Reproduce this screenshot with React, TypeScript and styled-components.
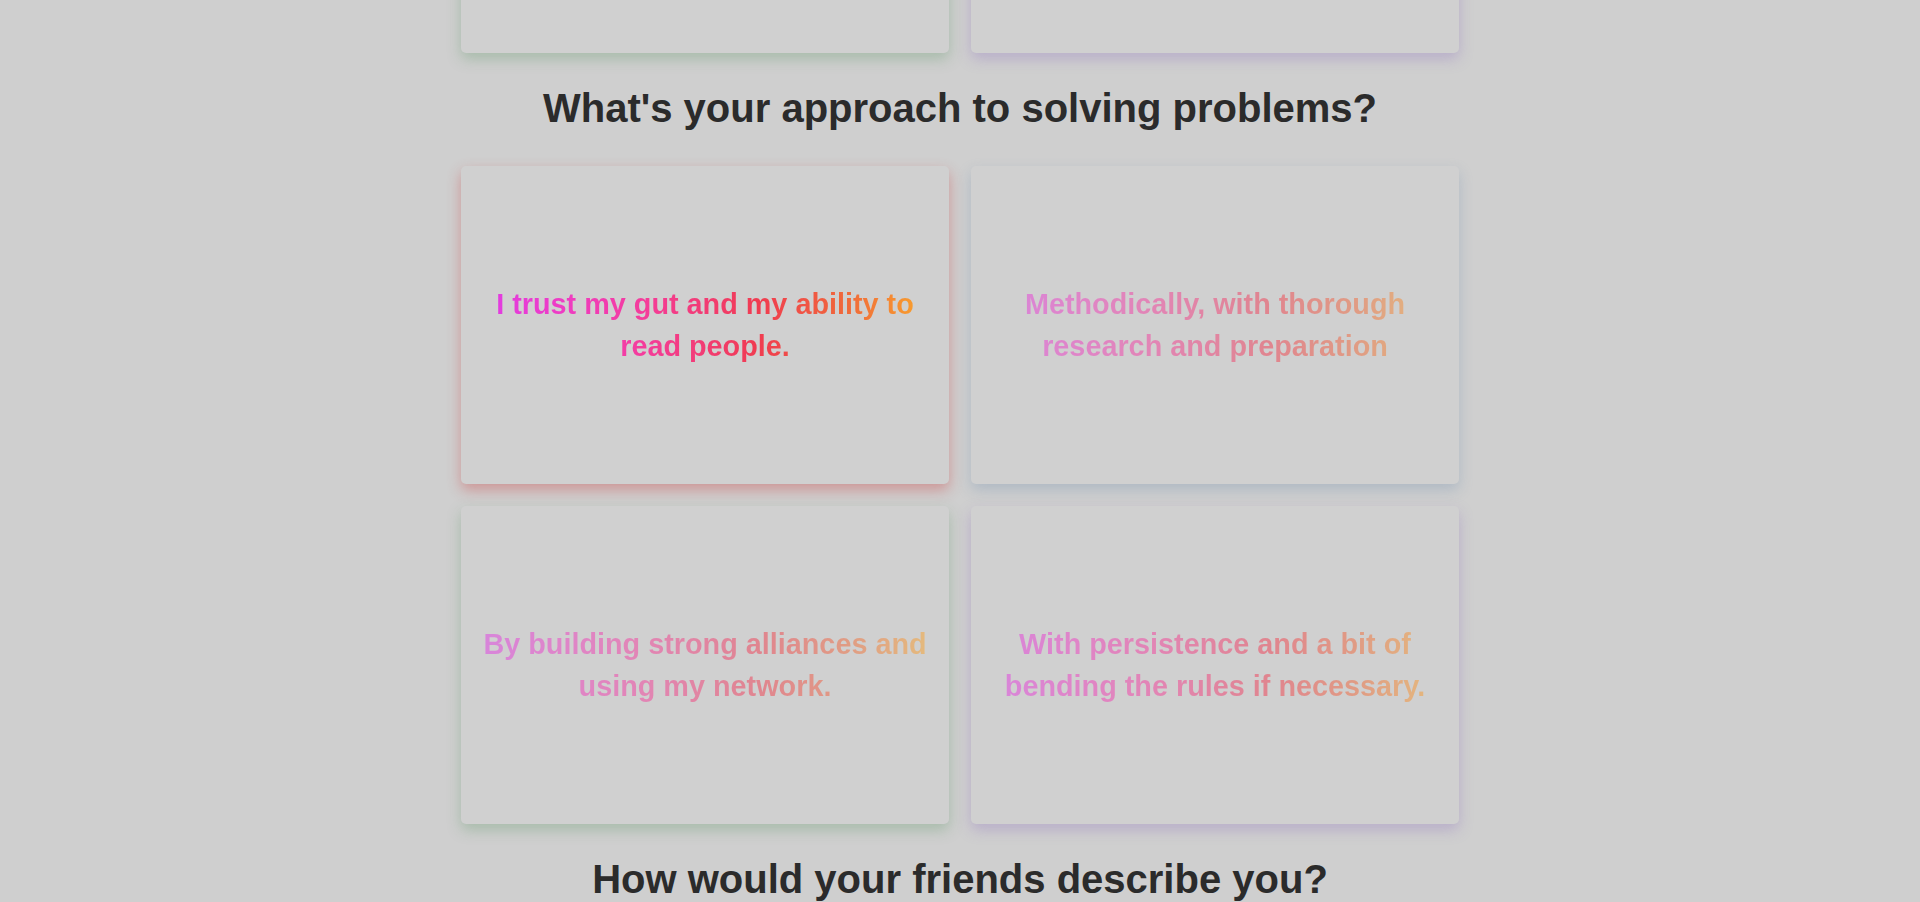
import React from "react";
import styled, { createGlobalStyle, css } from "styled-components";

const GlobalStyle = createGlobalStyle`
  html, body {
    margin: 0;
    padding: 0;
    background: #cfcfcf;
    overflow: hidden;
  }
  body {
    font-family: "Liberation Sans", Arial, Helvetica, sans-serif;
  }
`;

type Tint = "red" | "blue" | "green" | "purple";

const shadows: Record<Tint, string> = {
  red: "0 6px 14px rgba(205, 80, 80, 0.45)",
  blue: "0 6px 14px rgba(110, 140, 175, 0.32)",
  green: "0 6px 14px rgba(90, 150, 100, 0.34)",
  purple: "0 6px 14px rgba(140, 110, 190, 0.34)",
};

const Page = styled.main`
  width: 998px;
  margin: -265px auto 0;
  display: flex;
  flex-direction: column;
`;

const Grid = styled.div`
  display: grid;
  grid-template-columns: 1fr 1fr;
  gap: 22px;
`;

const Card = styled.button<{ $tint: Tint; $active?: boolean }>`
  height: 318px;
  border: none;
  border-radius: 5px;
  background: #d0d0d0;
  box-shadow: ${(p) => shadows[p.$tint]};
  padding: 0 20px;
  display: flex;
  align-items: center;
  justify-content: center;
  cursor: pointer;
  font-family: inherit;
`;

const Answer = styled.span<{ $active?: boolean }>`
  display: block;
  width: 100%;
  font-size: 28.8px;
  font-weight: 700;
  line-height: 42px;
  text-align: center;
  background-image: linear-gradient(
    90deg,
    #e03ce6 0%,
    #ee3cc4 18%,
    #f43c9c 36%,
    #f03c50 62%,
    #f06a3a 82%,
    #f9a62c 100%
  );
  -webkit-background-clip: text;
  background-clip: text;
  color: transparent;
  ${(p) =>
    !p.$active &&
    css`
      opacity: 0.5;
    `}
`;

const Question = styled.h2`
  margin: 32px 0 35px;
  font-size: 40px;
  font-weight: 700;
  line-height: 46px;
  color: #2b2b2b;
  text-align: center;
`;

const LastQuestion = styled(Question)`
  margin-bottom: 0;
`;

const answers: { text: string; tint: Tint; active?: boolean }[] = [
  { text: "I trust my gut and my ability to read people.", tint: "red", active: true },
  { text: "Methodically, with thorough research and preparation", tint: "blue" },
  { text: "By building strong alliances and using my network.", tint: "green" },
  { text: "With persistence and a bit of bending the rules if necessary.", tint: "purple" },
];

export default function App() {
  return (
    <>
      <GlobalStyle />
      <Page>
        <Grid>
          <Card $tint="green" />
          <Card $tint="purple" />
        </Grid>
        <Question>What's your approach to solving problems?</Question>
        <Grid>
          {answers.map((a) => (
            <Card key={a.text} $tint={a.tint} $active={a.active}>
              <Answer $active={a.active}>{a.text}</Answer>
            </Card>
          ))}
        </Grid>
        <LastQuestion>How would your friends describe you?</LastQuestion>
      </Page>
    </>
  );
}
